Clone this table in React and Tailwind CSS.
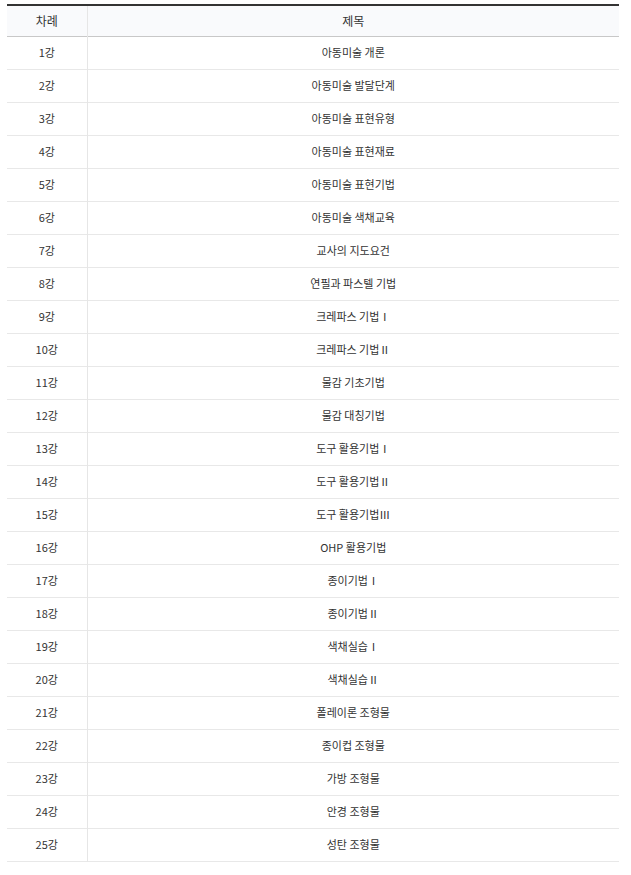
const lessons = [
  "아동미술 개론",
  "아동미술 발달단계",
  "아동미술 표현유형",
  "아동미술 표현재료",
  "아동미술 표현기법",
  "아동미술 색채교육",
  "교사의 지도요건",
  "연필과 파스텔 기법",
  "크레파스 기법Ⅰ",
  "크레파스 기법Ⅱ",
  "물감 기초기법",
  "물감 대칭기법",
  "도구 활용기법Ⅰ",
  "도구 활용기법Ⅱ",
  "도구 활용기법Ⅲ",
  "OHP 활용기법",
  "종이기법Ⅰ",
  "종이기법Ⅱ",
  "색채실습Ⅰ",
  "색채실습Ⅱ",
  "폴레이론 조형물",
  "종이컵 조형물",
  "가방 조형물",
  "안경 조형물",
  "성탄 조형물",
];

export default function App() {
  return (
    <div
      className="bg-white px-[7px] pt-[4px] text-[#333]"
      style={{ fontFamily: '"Noto Sans CJK KR", "Noto Sans", sans-serif' }}
    >
      <table className="w-[612px] border-collapse border-t-2 border-[#333] text-center">
        <thead>
          <tr className="h-[31px] bg-[#f9fafc] text-[12px] border-b border-[#c8c8c8]">
            <th className="w-[80px] border-r border-[#e6e6e6] font-normal">차례</th>
            <th className="font-normal">제목</th>
          </tr>
        </thead>
        <tbody>
          {lessons.map((title, i) => (
            <tr key={i} className="h-[33px] border-b border-[#e8e8e8] text-[11px]">
              <td className="border-r border-[#e6e6e6]">{i + 1}강</td>
              <td>{title}</td>
            </tr>
          ))}
        </tbody>
      </table>
    </div>
  );
}
